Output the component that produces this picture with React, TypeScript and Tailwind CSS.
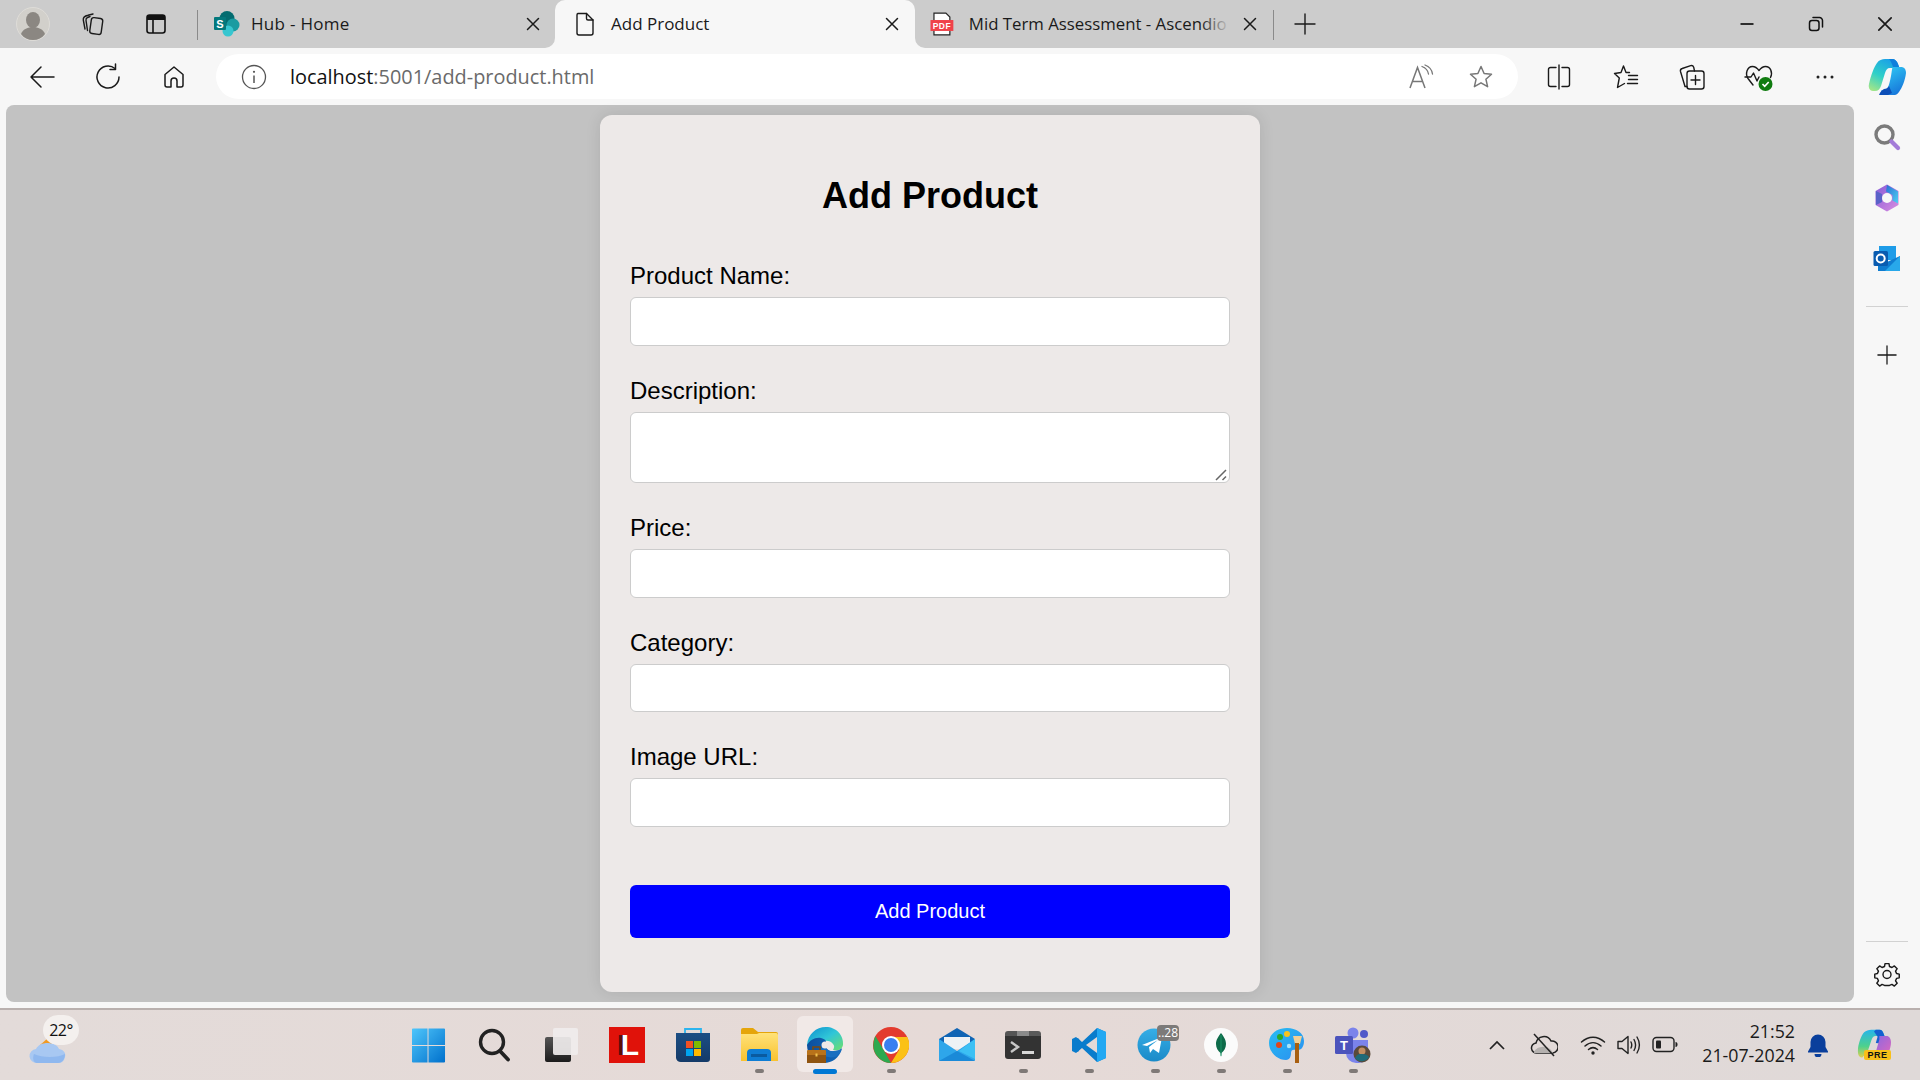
import React from "react";

const S = ({ s = 24, v = 24, children, className = "" }: { s?: number; v?: number; children: React.ReactNode; className?: string }) => (
  <svg width={s} height={s} viewBox={`0 0 ${v} ${v}`} fill="none" className={className}>{children}</svg>
);
const line = { stroke: "#1a1a1a", strokeWidth: 1.4, strokeLinecap: "round" as const, strokeLinejoin: "round" as const };

const Close = ({ s = 16 }: { s?: number }) => <S s={s} v={16}><path d="M2.5 2.5l11 11M13.5 2.5l-11 11" {...line} strokeWidth={1.5} /></S>;
const Plus = ({ s = 22 }: { s?: number }) => <S s={s} v={22}><path d="M11 1v20M1 11h20" {...line} /></S>;

const Profile = () => (
  <S s={34} v={34}>
    <circle cx="17" cy="17" r="16.5" fill="#d2d0cb" stroke="#dedcd8" />
    <ellipse cx="17" cy="13" rx="7" ry="8" fill="#8b8782" />
    <path d="M5 27c2-5 7-7 12-7s10 2 12 7c-3 4-7 6-12 6s-9-2-12-6z" fill="#8b8782" />
  </S>
);
const Workspaces = () => (
  <S s={26} v={26}>
    <rect x="10.500" y="7" width="11.500" height="16" rx="2.500" transform="rotate(8 16 15)" {...line} />
    <path d="M10 5.500L7.500 6.500C6.300 7 5.800 8 6 9.300L7.500 19.500" {...line} />
    <path d="M13 3L8 4.300C5 5 3 6.500 3.300 9L5 18" {...line} />
  </S>
);
const VTabs = () => (
  <S><rect x="3" y="3" width="18" height="18" rx="2.5" stroke="#111" strokeWidth="1.6" /><path d="M3 5.5a2.5 2.5 0 012.5-2.5h13A2.5 2.5 0 0121 5.5V8H3z" fill="#111" /><path d="M9 8v13" stroke="#111" strokeWidth="1.6" /></S>
);
const SharePoint = () => (
  <S s={28} v={28}>
    <circle cx="14" cy="8.5" r="7.5" fill="#036c70" />
    <circle cx="20" cy="15" r="6.5" fill="#1a9ba1" />
    <circle cx="15" cy="21" r="5.5" fill="#37c6d0" />
    <rect x="1" y="7" width="12" height="13" rx="1" fill="#03787c" />
    <text x="7" y="17.5" textAnchor="middle" fontFamily="Liberation Sans" fontWeight="700" fontSize="11" fill="#fff">S</text>
  </S>
);
const Doc = () => (
  <S s={26} v={26}><path d="M6 2.5h8.5L21 9v13a2 2 0 01-2 2H7a2 2 0 01-2-2V4a1.500 1.500 0 011-1.500z" {...line} /><path d="M14.500 2.500V7.500a1.500 1.500 0 001.500 1.500h5" {...line} /></S>
);
const Pdf = () => (
  <S s={26} v={26}>
    <path d="M5 2h12l4 4v18H5z" fill="#fff" stroke="#222" strokeWidth="1.2" />
    <rect x="1.500" y="9" width="23" height="11" fill="#f0424a" />
    <text x="13" y="17.800" textAnchor="middle" fontFamily="Liberation Sans" fontWeight="700" fontSize="8.500" fill="#fff" letterSpacing="0.5">PDF</text>
  </S>
);
const Min = () => <S s={18} v={18}><path d="M2.500 9h13" stroke="#111" strokeWidth="1.700" /></S>;
const Restore = () => (
  <S s={18} v={18}><rect x="2.500" y="5.500" width="9.500" height="10" rx="2.500" stroke="#111" strokeWidth="1.500" /><path d="M6 2.600h6.500a3 3 0 013 3V12" stroke="#111" strokeWidth="1.500" strokeLinecap="round" /></S>
);

const Back = () => <S s={28} v={28}><path d="M26 14H3M13 4L3 14l10 10" {...line} strokeWidth={1.5} /></S>;
const Refresh = () => <S s={28} v={28}><path d="M21 5.500A11 11 0 1025 14" {...line} strokeWidth={1.5} /><path d="M21.500 1v5.500H16" {...line} strokeWidth={1.5} /></S>;
const Home = () => <S s={26} v={26}><path d="M13 3L4 10.500V21a2 2 0 002 2h4v-6a3 3 0 016 0v6h4a2 2 0 002-2V10.500z" {...line} strokeWidth={1.5} /></S>;
const Info = () => <S s={26} v={26}><circle cx="13" cy="13" r="11.500" stroke="#555" strokeWidth="1.300" /><path d="M13 11.500V19" stroke="#555" strokeWidth="1.500" /><circle cx="13" cy="7.800" r="1.100" fill="#555" /></S>;
const ReadAloud = () => (
  <S s={26} v={26}>
    <path d="M2 24L9.500 3.500 17 24M4.500 17.500h10" stroke="#777" strokeWidth="1.500" />
    <path d="M14 2.500c4 1.500 6 4 6.500 7.500M17 1c4 1.500 7 5 7.500 9" stroke="#777" strokeWidth="1.300" strokeLinecap="round" />
  </S>
);
const Star = () => <S s={26} v={26}><path d="M13 2.500l3.100 7 7.400.7-5.600 5 1.700 7.500L13 18.800l-6.600 3.900 1.700-7.500-5.600-5 7.400-.7z" stroke="#777" strokeWidth="1.500" strokeLinejoin="round" /></S>;
const Split = () => <S s={26} v={26}><path d="M10 3.500H4.500a2 2 0 00-2 2v15a2 2 0 002 2H10M16 3.500h5.500a2 2 0 012 2v15a2 2 0 01-2 2H16" {...line} /><path d="M13 1v24" {...line} /></S>;
const Favs = () => (
  <S s={26} v={26}>
    <path d="M16.500 8.500H13L10.500 2 8 8.500 1.500 9.500 6.300 14 4.500 23.500 11.500 19.500" {...line} />
    <path d="M15.500 11.500h9M15.500 15.500h9M14.500 19.500h10" {...line} />
  </S>
);
const Collections = () => <S s={28} v={28}><rect x="9" y="8" width="17" height="18" rx="2.500" {...line} /><path d="M17.500 12.500v9M13 17h9" {...line} /><path d="M9 23.500H7L2.500 8.500a2.500 2.500 0 011.700-3l8.500-2.800a2.500 2.500 0 013 1.500L16.500 8" {...line} /></S>;
const Health = () => (
  <S s={30} v={30}>
    <path d="M9 23L4 16.500C1 12 3 4.500 8.500 4.500c3 0 5 2 6.500 4 1.500-2 3.500-4 6.500-4 5 0 7.500 6 5 11" {...line} />
    <path d="M1 15h6l2.500-4 3.500 8 2-4" {...line} />
    <circle cx="21.500" cy="22" r="7" fill="#107c10" />
    <path d="M18.500 22l2.200 2.300 4-4.300" stroke="#fff" strokeWidth="1.700" />
  </S>
);
const Dots = () => <S s={22} v={22}><circle cx="4" cy="11" r="1.500" fill="#222" /><circle cx="11" cy="11" r="1.500" fill="#222" /><circle cx="18" cy="11" r="1.500" fill="#222" /></S>;
const Copilot = () => (
  <S s={38} v={38}>
    <defs>
      <linearGradient id="cp1" x1="0.700" y1="0" x2="0.200" y2="1"><stop offset="0" stopColor="#1a9fe8" /><stop offset="0.550" stopColor="#2fd0c8" /><stop offset="1" stopColor="#9fe58a" /></linearGradient>
      <linearGradient id="cp3" x1="0.300" y1="0" x2="0.800" y2="1"><stop offset="0" stopColor="#2fc5f3" /><stop offset="1" stopColor="#1570d8" /></linearGradient>
    </defs>
    <path d="M17 1h7c3 0 5 2 6 5l1.500 4H22c-3 0-4 2-5 5l-4 13c-1 3-3 5-6 5H5c-3 0-5-3-4-7C3 17 6 9 9 5c2-3 5-4 8-4z" fill="url(#cp1)" />
    <path d="M21 1h3c3 0 5 2 6 5l5 14-8-3 1-6c-1-1-2-1-3-2-1-3-2-6-4-8z" fill="#0f7fdc" />
    <path d="M25 9h8c3 0 5 2 5 6-1 8-4 15-7 19-2 3-4 3-6 3h-6c-3 0-5-2-6-5 1 1 4 1 6-1 2-3 3-8 4-13 1-5 1-9 2-9z" fill="url(#cp3)" />
    <path d="M11 37c1-3 3-5 5-6 2 0 4-1 5-3l3 7-4 2z" fill="#0d4fb8" />
  </S>
);
const Search2 = () => (
  <S s={28} v={28}><circle cx="11.500" cy="11.500" r="8.500" stroke="#7b7b7b" strokeWidth="3.400" /><path d="M18.500 18.500l6.500 6.500" stroke="#a37bd8" strokeWidth="4.200" strokeLinecap="round" /></S>
);
const M365 = () => (
  <S s={28} v={28}>
    <defs>
      <linearGradient id="m1" x1="0" y1="0" x2="1" y2="1"><stop offset="0" stopColor="#8a5dd8" /><stop offset="1" stopColor="#d68ce0" /></linearGradient>
      <linearGradient id="m2" x1="0" y1="0" x2="1" y2="1"><stop offset="0" stopColor="#2a6fd4" /><stop offset="1" stopColor="#4fd0f2" /></linearGradient>
    </defs>
    <path d="M14 1.500l10.500 6v13L14 26.500 3.500 20.500v-13z" fill="url(#m1)" stroke="url(#m1)" strokeWidth="2" strokeLinejoin="round" />
    <path d="M14 1l11 6.500v12l-5.500-3V11L13 7.500z" fill="url(#m2)" />
    <path d="M3 7l6 3v8l-6 3z" fill="#5a62c8" />
    <circle cx="14" cy="14" r="5" fill="#f7f7f7" />
  </S>
);
const Outlook = () => (
  <S s={28} v={28}>
    <rect x="6" y="1" width="17" height="14" fill="#1e9ce8" />
    <path d="M5 12l9 5 13-6v15H5z" fill="#0f7cd0" />
    <path d="M27 11v15H12z" fill="#28a8ea" />
    <rect x="0.500" y="6" width="14.500" height="15" rx="1.500" fill="#0a5cb0" />
    <circle cx="7.700" cy="13.500" r="4" stroke="#fff" strokeWidth="2" />
  </S>
);
const Gear = () => (
  <S s={28} v={28}>
    <path d="M11.800 2.500h4.400l.6 3.200 2.700 1.100 2.700-1.800 3.100 3.100-1.800 2.700 1.100 2.700 3 .6v4.200l-3 .6-1.100 2.700 1.800 2.700-3.100 3.100-2.700-1.800-2.700 1.100-.6 0h-4.400l-.6 0-2.700-1.100-2.700 1.800-3.100-3.100 1.800-2.700-1.100-2.700-3-.6v-4.200l3-.6 1.100-2.700-1.800-2.700 3.100-3.100 2.700 1.800 2.700-1.100z" transform="translate(1.400 1.400) scale(.9)" {...line} strokeWidth={1.600} />
    <circle cx="14" cy="14.500" r="4" {...line} />
  </S>
);

const Weather = () => (
  <div className="relative w-[50px] h-[50px]">
    <svg width="50" height="50" viewBox="0 0 50 50" fill="none">
      <path d="M14 25l8-7 4 6z" fill="#f29a22" />
      <path d="M11 43a7 7 0 01-1-14c2-4 6-6 12-6 6 0 10 3 11 6 5 1 7 4 6 8-1 4-3 6-7 6z" fill="#a8c8f2" />
      <path d="M8 34c8 4 24 4 31 0 0 5-3 9-7 9H11c-3 0-5-4-3-9z" fill="#85b0ee" opacity=".7" />
    </svg>
    <div className="absolute left-[17px] top-[-5px] w-[36px] h-[30px] rounded-full bg-[#f4f0ee] flex items-center justify-center font-['Open_Sans'] text-[16px] text-[#111] tracking-[-0.5px]">22°</div>
  </div>
);
const Win = () => (
  <svg width="35" height="35" viewBox="0 0 36 36">
    <defs><linearGradient id="w" x1="0" y1="0" x2="1" y2="1"><stop offset="0" stopColor="#4fc6fb" /><stop offset="1" stopColor="#0070cc" /></linearGradient></defs>
    <path fill="url(#w)" d="M1 1.500A1 1 0 012 .5h15v17H1zM18 .5h16a1 1 0 011 1v16H18zM1 18.500h16v17H2a1 1 0 01-1-1zM18 18.500h17v16a1 1 0 01-1 1H18z" />
  </svg>
);
const TSearch = () => <S s={34} v={34}><circle cx="15" cy="14" r="11.500" stroke="#222" strokeWidth="3.400" /><path d="M23 23l8 8.500" stroke="#222" strokeWidth="3.800" strokeLinecap="round" /></S>;
const TaskView = () => (
  <svg width="36" height="36" viewBox="0 0 36 36">
    <defs><linearGradient id="tv" x1="0" y1="0" x2="0" y2="1"><stop offset="0" stopColor="#555" /><stop offset="1" stopColor="#1c1c1c" /></linearGradient></defs>
    <rect x="3" y="10" width="26" height="25" rx="2" fill="url(#tv)" />
    <rect x="11" y="1" width="25" height="27" rx="2" fill="#f0eded" opacity=".92" />
  </svg>
);
const LIcon = () => (
  <div className="w-[36px] h-[36px] bg-[#e0120a] flex items-center justify-end pr-[6px]">
    <span className="font-['Liberation_Sans'] font-bold text-[30px] leading-[36px] text-white [text-shadow:-4px_0_0_#5c0d08]">L</span>
  </div>
);
const Store = () => (
  <svg width="36" height="36" viewBox="0 0 36 36">
    <defs><linearGradient id="st" x1="0" y1="0" x2="0" y2="1"><stop offset="0" stopColor="#1c4e84" /><stop offset="1" stopColor="#143a68" /></linearGradient></defs>
    <path d="M10 7V2h16v5" fill="none" stroke="#2cb4ee" strokeWidth="1.800" />
    <path d="M1 6h34v26a3 3 0 01-3 3H6a5 5 0 01-5-4z" fill="url(#st)" />
    <rect x="11" y="14" width="7" height="7" fill="#f25022" /><rect x="19" y="14" width="7" height="7" fill="#7fba00" />
    <rect x="11" y="22" width="7" height="7" fill="#00a4ef" /><rect x="19" y="22" width="7" height="7" fill="#ffb900" />
  </svg>
);
const Folder = () => (
  <svg width="38" height="36" viewBox="0 0 38 36">
    <defs><linearGradient id="fo" x1="0" y1="0" x2="0" y2="1"><stop offset="0" stopColor="#ffe27a" /><stop offset="1" stopColor="#f9c22e" /></linearGradient></defs>
    <path d="M1 3a2 2 0 012-2h10l5 4h18a2 2 0 012 2v6H1z" fill="#e5a50a" />
    <path d="M1 7h18l-2-1h19a2 2 0 012 2v26H1z" fill="url(#fo)" />
    <path d="M7 34v-8a4 4 0 014-4h16a4 4 0 014 4v8z" fill="#0f7dd4" />
    <rect x="11" y="27" width="16" height="3" fill="#0a5ba0" />
  </svg>
);
const Edge = () => (
  <svg width="38" height="38" viewBox="0 0 38 38">
    <defs>
      <linearGradient id="e1" x1="0" y1="0" x2="1" y2="1"><stop offset="0" stopColor="#0c8fcf" /><stop offset=".5" stopColor="#30c6d8" /><stop offset="1" stopColor="#6fe06a" /></linearGradient>
      <linearGradient id="e2" x1="0" y1="0" x2="1" y2="0"><stop offset="0" stopColor="#0c4f9e" /><stop offset="1" stopColor="#1469b8" /></linearGradient>
    </defs>
    <path d="M1 19C2 8 10 1 20 1c10 0 18 8 17 18-1 5-6 6-10 5 1-2 2-4 0-6-3-4-9-4-13-1-6 1-9 2-13 2z" fill="url(#e1)" />
    <path d="M1 19c3-5 8-8 14-7 4 1 6 3 5 6-1 3 1 8 9 7 3 0 5-1 7-2-3 9-10 14-18 14C9 37 1 29 1 19z" fill="url(#e2)" />
    <path d="M20 18c-2 3 1 8 8 7 3 0 6-1 8-3-1 3-3 6-5 8-5 3-13 1-15-3-2-3-1-7 4-9z" fill="#1a6fc0" />
    <circle cx="19" cy="19" r="3.500" fill="#f1e9e7" />
    <rect x="1" y="24" width="19" height="13" rx="1" fill="#b8721a" />
    <rect x="1" y="29" width="19" height="8" fill="#8f5410" />
    <path d="M7 24v-3h7v3" fill="none" stroke="#7a4a10" strokeWidth="1.600" />
    <rect x="9.500" y="27.500" width="2" height="3" fill="#f2c14e" />
  </svg>
);
const Chrome = () => (
  <svg width="36" height="36" viewBox="0 0 36 36">
    <circle cx="18" cy="18" r="18" fill="#e33b2e" />
    <path d="M2.400 9L10.500 22.500 18 36A18 18 0 01.500 21C0 17 1 12 2.400 9z" fill="#2da94f" />
    <path d="M18 10h16.300A18 18 0 0118 36l8-13z" fill="#fbc116" />
    <circle cx="18" cy="18" r="9" fill="#fff" />
    <circle cx="18" cy="18" r="7" fill="#3a7ff0" />
  </svg>
);
const Mail = () => (
  <svg width="36" height="36" viewBox="0 0 36 36">
    <path d="M0 12L18 1l18 11v8H0z" fill="#0f64b4" />
    <path d="M5 10h26v12H5z" fill="#eef2f5" />
    <path d="M0 12l18 12 18-12v21a1 1 0 01-1 1H1a1 1 0 01-1-1z" fill="#2ea6ea" />
    <path d="M0 34l18-10 18 10z" fill="#1a8ad8" />
    <path d="M36 12v20L20 24z" fill="#3cc0f4" />
  </svg>
);
const Terminal = () => (
  <svg width="36" height="28" viewBox="0 0 36 28">
    <path d="M0 3a3 3 0 013-3h9v6H0z" fill="#555" /><rect x="12" width="12" height="6" fill="#8a8a8a" /><path d="M24 0h9a3 3 0 013 3v3H24z" fill="#5a5a5a" />
    <path d="M0 5h36v20a3 3 0 01-3 3H3a3 3 0 01-3-3z" fill="#333" />
    <path d="M6 11l7 5-7 5" fill="none" stroke="#c8c8c8" strokeWidth="2.400" />
    <rect x="17" y="20" width="12" height="3" fill="#d8d8d8" />
  </svg>
);
const VSCode = () => (
  <svg width="36" height="36" viewBox="0 0 36 36">
    <path d="M26 1l9 4v26l-9 4-15-14-6 5-4-2v-12l4-2 6 5z" fill="#0a7ccc" />
    <path d="M26 1l9 4v26l-9 4z" fill="#23a8f2" />
    <path d="M26 10v16l-11-8z" fill="#e6dad7" />
    <path d="M4 12l3-1 5 6-5 8-3-2 4-5z" fill="#0a7ccc" />
  </svg>
);
const Telegram = () => (
  <div className="relative w-[36px] h-[36px]">
    <svg width="36" height="36" viewBox="0 0 36 36">
      <defs><linearGradient id="tg" x1="0" y1="0" x2="0" y2="1"><stop offset="0" stopColor="#36aee6" /><stop offset="1" stopColor="#1a8ac8" /></linearGradient></defs>
      <circle cx="17" cy="18" r="16.500" fill="url(#tg)" />
      <path d="M5 18l20-8-3 16-6-4-3 4-1-6 9-7-11 6z" fill="#fff" />
    </svg>
    <div className="absolute left-[20px] top-[-2px] w-[22px] h-[16px] rounded-[4px] bg-[#7c7a79] text-white font-['Open_Sans'] text-[12px] leading-[16px] text-center">..28</div>
  </div>
);
const Mongo = () => (
  <svg width="34" height="34" viewBox="0 0 34 34">
    <circle cx="17" cy="17" r="17" fill="#fbfbfb" />
    <path d="M17 5c4 5 5 8 5 11 0 4-2 7-4.500 9l-.5 4-.5-4C14 23 12 20 12 16c0-3 1-6 5-11z" fill="#0e6b4a" />
    <path d="M17 7v21" stroke="#1ea070" strokeWidth=".8" />
  </svg>
);
const Paint = () => (
  <svg width="36" height="36" viewBox="0 0 36 36">
    <defs><linearGradient id="pt" x1="0" y1="0" x2="1" y2="1"><stop offset="0" stopColor="#27bdf2" /><stop offset="1" stopColor="#2b8ef0" /></linearGradient></defs>
    <path d="M18 1c9 0 17 5 17 13 0 7-4 10-8 9-3-1-5 0-5 3s-1 7-5 7C8 33 0 25 0 16 0 7 8 1 18 1z" fill="url(#pt)" />
    <circle cx="10" cy="18" r="3" fill="#e0461a" /><circle cx="11" cy="10" r="3" fill="#2aa82a" /><circle cx="18" cy="7" r="3" fill="#f8c31c" />
    <circle cx="20" cy="19" r="2.200" fill="#a8e2f8" />
    <path d="M24 9h9l-2 8h-5z" fill="#f1cf96" /><rect x="26" y="16" width="4" height="20" fill="#a85f10" />
  </svg>
);
const Teams = () => (
  <svg width="38" height="36" viewBox="0 0 38 36">
    <circle cx="19" cy="6" r="5.500" fill="#7b83eb" /><circle cx="30" cy="7" r="4" fill="#5059c9" />
    <path d="M12 13h22v14a9 9 0 01-9 9h-3a10 10 0 01-10-10z" fill="#7b83eb" />
    <rect x="1" y="9" width="18" height="18" rx="1.500" fill="#4b53bc" />
    <text x="10" y="23" textAnchor="middle" fontFamily="Liberation Sans" fontWeight="700" fontSize="13" fill="#fff">T</text>
    <circle cx="28" cy="27" r="8.500" fill="#5a4a3a" />
    <circle cx="28" cy="24" r="3.500" fill="#c28e62" />
    <path d="M21 31c2-4 4-4 7-4s6 1 7 3a8.500 8.500 0 01-14 1z" fill="#1f6a78" />
  </svg>
);
const Chev = () => <S s={20} v={20}><path d="M3 14l7-7 7 7" stroke="#222" strokeWidth="1.700" /></S>;
const CloudOff = () => (
  <S s={28} v={28}><path d="M7 22a5 5 0 01-1-10 8 8 0 0115-2 6 6 0 012 12z" stroke="#222" strokeWidth="1.500" /><path d="M4 22c0-3 4-6 8-6 3-1 8 0 11 6z" fill="#b5b1af" /><path d="M4 3l20 22" stroke="#222" strokeWidth="1.500" /></S>
);
const Wifi = () => <S s={26} v={26}><path d="M1.500 10c7-6.500 16-6.500 23 0M5 14c5-4.500 11-4.500 16 0M8.500 17.500c3-2.500 6-2.500 9 0" stroke="#222" strokeWidth="1.500" strokeLinecap="round" /><circle cx="13" cy="21" r="1.700" fill="#222" /></S>;
const Volume = () => <S s={26} v={26}><path d="M2 9.500h4l6-5v17l-6-5H2z" stroke="#222" strokeWidth="1.400" strokeLinejoin="round" /><path d="M15 10c1 2 1 4 0 6M18 7.500c2 3.500 2 7.500 0 11M21 5c3 5 3 11 0 16" stroke="#222" strokeWidth="1.400" strokeLinecap="round" /></S>;
const Battery = () => <S s={26} v={26}><rect x="1" y="5.500" width="21" height="14" rx="3.500" stroke="#222" strokeWidth="1.400" /><rect x="4" y="8.500" width="5" height="8" rx="1" fill="#222" /><path d="M23.500 10v5c1.500 0 2-1 2-2.500s-.500-2.500-2-2.500z" fill="#222" /></S>;
const Bell = () => <S s={24} v={24}><path d="M12 1.500a7.500 7.500 0 00-7.500 7.500v5L2 18.500v1h20v-1L19.500 14V9A7.500 7.500 0 0012 1.500z" fill="#0a3f9c" /><path d="M8.500 21a3.500 3.500 0 007 0z" fill="#0a3f9c" /></S>;

const CopilotPre = () => (
  <div className="relative w-[38px] h-[36px]">
    <svg width="36" height="34" viewBox="0 0 38 38" fill="none">
      <defs>
        <linearGradient id="cq1" x1="0" y1="0" x2="0" y2="1"><stop offset="0" stopColor="#27b5ea" /><stop offset=".6" stopColor="#4ed18c" /><stop offset="1" stopColor="#e0d050" /></linearGradient>
        <linearGradient id="cq2" x1="0" y1="0" x2="1" y2="1"><stop offset="0" stopColor="#7c68e8" /><stop offset="1" stopColor="#e868b8" /></linearGradient>
      </defs>
      <path d="M16 3h9c3 0 4 2 5 5l1 2H21c-3 0-4 2-5 5l-4 12-6 7C3 34 1 32 1 27c0-8 4-18 7-21 2-2 5-3 8-3z" fill="url(#cq1)" />
      <path d="M21 3h4c3 0 4 2 5 5l3 11-12-1 2-7-4-6z" fill="#1560d0" />
      <path d="M25 10h8c3 0 5 3 5 7 0 7-4 16-8 19-1 1-3 1-5 1h-9l-3-2c4 0 6-2 8-7l4-14z" fill="url(#cq2)" />
    </svg>
    <div className="absolute left-[8px] top-[23px] w-[27px] h-[10px] rounded-[2px] bg-[#f8c01a] text-[#111] font-['Liberation_Sans'] font-bold text-[9px] leading-[10px] text-center tracking-[0.5px]">PRE</div>
  </div>
);

const Field = ({ label, textarea }: { label: string; textarea?: boolean }) => (
  <div className="mb-[31px]">
    <label className="block text-[24px] leading-[27px] mb-[8px] text-black">{label}</label>
    {textarea ? (
      <div className="relative">
        <textarea className="block w-full h-[71.500px] resize-none bg-white border-[1.5px] border-[#ccc] rounded-[6px] outline-none" />
        <svg className="absolute right-[3px] bottom-[2px]" width="12" height="12" viewBox="0 0 12 12" fill="none">
          <path d="M1 11L11 1M7.500 11L11 7.500" stroke="#666" strokeWidth="1.500" />
        </svg>
      </div>
    ) : (
      <input type="text" className="block w-full h-[48.500px] bg-white border-[1.5px] border-[#ccc] rounded-[6px] outline-none" />
    )}
  </div>
);

const Slot = ({ w, children, h = "h-full" }: { w: string; children: React.ReactNode; h?: string }) => (
  <div className={`${w} ${h} shrink-0 flex items-center justify-center`}>{children}</div>
);

const TaskItem = ({ children, dot }: { children: React.ReactNode; dot?: boolean }) => (
  <div className="relative w-[66px] h-full shrink-0 flex items-center justify-center">
    {children}
    {dot && <div className="absolute left-[28.500px] bottom-[7px] w-[9px] h-[4px] rounded-full bg-[#7f7977]" />}
  </div>
);

export default function App() {
  return (
    <div className="w-[1920px] h-[1080px] flex flex-col overflow-hidden bg-[#f7f7f7] font-['Open_Sans',sans-serif]">
      {/* tab strip */}
      <div className="h-[48px] shrink-0 flex bg-[#cccccc] text-[#1a1a1a] text-[17px]">
        <Slot w="w-[66px]"><Profile /></Slot>
        <Slot w="w-[54px]"><Workspaces /></Slot>
        <Slot w="w-[72px]"><VTabs /></Slot>
        <div className="w-[5px]" />
        <div className="w-[1px] h-[30px] mt-[10px] bg-[#8a8a8a]" />
        <div className="w-[357px] flex items-center pl-[15px] pb-[1px] pr-[11px]">
          <SharePoint />
          <span className="ml-[10px] flex-1 tracking-[0.3px]">Hub - Home</span>
          <Slot w="w-[22px]"><Close /></Slot>
        </div>
        <div className="relative w-[360px] h-full bg-[#f7f7f7] rounded-t-[10px] flex items-center pl-[17px] pr-[12px]">
          <svg className="absolute left-[-10px] bottom-0" width="10" height="10" viewBox="0 0 10 10"><path d="M10 0v10H0a10 10 0 0010-10z" fill="#f7f7f7" /></svg>
          <svg className="absolute right-[-10px] bottom-0" width="10" height="10" viewBox="0 0 10 10"><path d="M0 0v10h10A10 10 0 010 0z" fill="#f7f7f7" /></svg>
          <Doc />
          <span className="ml-[13px] flex-1">Add Product</span>
          <Slot w="w-[22px]"><Close /></Slot>
        </div>
        <div className="w-[358px] flex items-center pl-[14px] pr-[12px]">
          <Pdf />
          <div className="relative ml-[14px] w-[269px] mr-[3px] whitespace-nowrap text-[16.800px]">
            Mid Term Assessment - Ascendio
            <div className="absolute right-[6px] top-0 bottom-0 w-[30px] bg-gradient-to-r from-transparent to-[#cccccc]" />
          </div>
          <Slot w="w-[22px]"><Close /></Slot>
        </div>
        <div className="w-[1px] h-[30px] mt-[10px] bg-[#8a8a8a]" />
        <Slot w="w-[62px]"><Plus /></Slot>
        <div className="flex-1" />
        <Slot w="w-[69px]"><Min /></Slot>
        <Slot w="w-[69px]"><Restore /></Slot>
        <Slot w="w-[70px]"><Close s={18} /></Slot>
      </div>

      {/* toolbar */}
      <div className="h-[57px] shrink-0 flex pl-[9px] pb-[6px] pt-[6px] bg-[#f7f7f7]">
        <Slot w="w-[66px]"><Back /></Slot>
        <Slot w="w-[66px]"><Refresh /></Slot>
        <Slot w="w-[66px]"><Home /></Slot>
        <div className="ml-[9px] w-[1302px] h-[45px] bg-white rounded-full flex items-center pl-[19px] pr-[7px]">
          <Slot w="w-[38px]"><Info /></Slot>
          <div className="ml-[17px] flex-1 text-[19.900px] text-[#6a6a6a]"><span className="text-[#111]">localhost</span>:5001/add-product.html</div>
          <Slot w="w-[60px]"><ReadAloud /></Slot>
          <Slot w="w-[60px]"><Star /></Slot>
        </div>
        <div className="w-[8px]" />
        <Slot w="w-[66.500px]"><Split /></Slot>
        <Slot w="w-[66.500px]"><Favs /></Slot>
        <Slot w="w-[66.500px]"><Collections /></Slot>
        <Slot w="w-[66.500px]"><Health /></Slot>
        <Slot w="w-[66.500px]"><Dots /></Slot>
        <Slot w="w-[57px]"><Copilot /></Slot>
      </div>

      {/* page + side bar */}
      <div className="h-[897px] shrink-0 flex">
        <div className="ml-[6px] w-[1848px] h-full rounded-[8px] bg-[#c2c2c2] flex justify-center items-start pt-[10px] font-['Liberation_Sans',sans-serif]">
          <div className="w-[660px] h-[877px] bg-[#ede9e8] rounded-[12px] shadow-[0_0_15px_rgba(0,0,0,0.1)] px-[30px] pt-[57px]">
            <h1 className="text-[36px] leading-[48px] font-bold text-center text-black mb-[42px]">Add Product</h1>
            <Field label="Product Name:" />
            <Field label="Description:" textarea />
            <Field label="Price:" />
            <Field label="Category:" />
            <Field label="Image URL:" />
            <button className="block w-full h-[53px] mt-[58px] bg-[#0000ff] text-white text-[20px] rounded-[6px]">Add Product</button>
          </div>
        </div>
        <div className="w-[66px] h-full flex flex-col items-center pt-[2px]">
          <Slot w="w-full" h="h-[60px]"><Search2 /></Slot>
          <Slot w="w-full" h="h-[60px] mt-[1px]"><M365 /></Slot>
          <Slot w="w-full" h="h-[60px] mt-[1px]"><Outlook /></Slot>
          <div className="mt-[17px] w-[42px] h-[1px] bg-[#d2d2d2]" />
          <Slot w="w-full" h="h-[96px]"><Plus s={20} /></Slot>
          <div className="flex-1" />
          <div className="mb-[6px] w-[42px] h-[1px] bg-[#d2d2d2]" />
          <Slot w="w-full" h="h-[54px] pb-[2px]"><Gear /></Slot>
        </div>
      </div>
      <div className="h-[6px] shrink-0 bg-[#f7f7f7]" />

      {/* taskbar */}
      <div className="h-[72px] shrink-0 flex items-center border-t-2 border-[#b9b0ae] bg-gradient-to-r from-[#e3dbd9] via-[#e6dad7] to-[#dfd9d8]">
        <div className="w-[395px] h-full shrink-0 pl-[26px] flex items-center"><Weather /></div>
        <TaskItem><Win /></TaskItem>
        <TaskItem><TSearch /></TaskItem>
        <TaskItem><TaskView /></TaskItem>
        <div className="w-[1px] shrink-0" />
        <TaskItem><LIcon /></TaskItem>
        <TaskItem><Store /></TaskItem>
        <TaskItem dot><Folder /></TaskItem>
        <div className="relative w-[66px] h-full shrink-0 flex items-center justify-center">
          <div className="absolute left-[5px] top-[6px] w-[56px] h-[56px] rounded-[6px] bg-[#f1e9e7]" />
          <div className="relative"><Edge /></div>
          <div className="absolute left-[21px] bottom-[6px] w-[24px] h-[5px] rounded-full bg-[#0078d4]" />
        </div>
        <TaskItem dot><Chrome /></TaskItem>
        <TaskItem><Mail /></TaskItem>
        <TaskItem dot><Terminal /></TaskItem>
        <TaskItem dot><VSCode /></TaskItem>
        <TaskItem dot><Telegram /></TaskItem>
        <TaskItem dot><Mongo /></TaskItem>
        <TaskItem dot><Paint /></TaskItem>
        <TaskItem dot><Teams /></TaskItem>
        <div className="w-[78px] shrink-0" />
        <Slot w="w-[66px]"><Chev /></Slot>
        <Slot w="w-[28px]"><CloudOff /></Slot>
        <div className="w-[21px] shrink-0" />
        <Slot w="w-[28px]"><Wifi /></Slot>
        <div className="w-[8px] shrink-0" />
        <Slot w="w-[28px]"><Volume /></Slot>
        <div className="w-[8px] shrink-0" />
        <Slot w="w-[28px]"><Battery /></Slot>
        <div className="w-[116px] shrink-0 text-right text-[#1a1a1a] text-[17.800px] leading-[24px] pb-[4px]">
          <div>21:52</div>
          <div>21-07-2024</div>
        </div>
        <div className="w-[10px] shrink-0" />
        <Slot w="w-[26px]"><Bell /></Slot>
        <div className="w-[25px] shrink-0" />
        <CopilotPre />
      </div>
    </div>
  );
}
